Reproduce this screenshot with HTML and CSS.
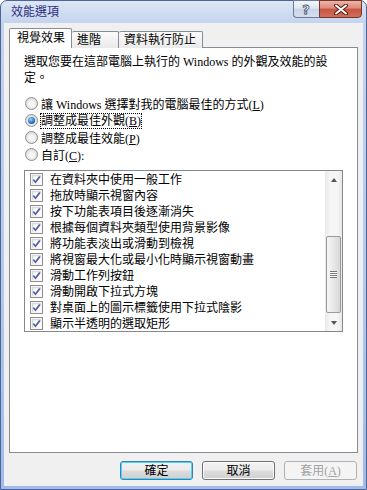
FILE: index.html
```html
<!DOCTYPE html>
<html lang="zh-Hant">
<head>
    <meta charset="utf-8">
    <title>效能選項</title>
    <link rel="stylesheet" href="styles.css">
</head>
<body>
    <div class="window">
        <!-- 標題列 -->
        <div class="titlebar">
            <span class="title">效能選項</span>
            <div class="caption">
                <div class="cap help">?</div>
                <div class="cap close">
                    <svg width="16" height="11" viewBox="0 0 16 11">
                        <path d="M3 1.5 L13 9.5 M13 1.5 L3 9.5" stroke="#5b1d16" stroke-width="4" stroke-linecap="round"/>
                        <path d="M3 1.5 L13 9.5 M13 1.5 L3 9.5" stroke="#fff" stroke-width="2" stroke-linecap="round"/>
                    </svg>
                </div>
            </div>
        </div>
        <div class="client">
            <div class="tabs">
                <div class="tab active">視覺效果</div>
                <div class="tab t2">進階</div>
                <div class="tab t3">資料執行防止</div>
            </div>
            <div class="panel">
                <p class="intro">選取您要在這部電腦上執行的 Windows 的外觀及效能的設定。</p>
                <ul class="radios">
                    <li><span class="radio"></span><span>讓 Windows 選擇對我的電腦最佳的方式(<u>L</u>)</span></li>
                    <li><span class="radio on"></span><span class="focus">調整成最佳外觀(<u>B</u>)</span></li>
                    <li><span class="radio"></span><span>調整成最佳效能(<u>P</u>)</span></li>
                    <li><span class="radio"></span><span>自訂(<u>C</u>):</span></li>
                </ul>
                <div class="listbox">
                    <ul class="items">
                        <li><span class="check"></span>在資料夾中使用一般工作</li>
                        <li><span class="check"></span>拖放時顯示視窗內容</li>
                        <li><span class="check"></span>按下功能表項目後逐漸消失</li>
                        <li><span class="check"></span>根據每個資料夾類型使用背景影像</li>
                        <li><span class="check"></span>將功能表淡出或滑動到檢視</li>
                        <li><span class="check"></span>將視窗最大化或最小化時顯示視窗動畫</li>
                        <li><span class="check"></span>滑動工作列按鈕</li>
                        <li><span class="check"></span>滑動開啟下拉式方塊</li>
                        <li><span class="check"></span>對桌面上的圖示標籤使用下拉式陰影</li>
                        <li><span class="check"></span>顯示半透明的選取矩形</li>
                    </ul>
                    <div class="scrollbar">
                        <div class="arrow up"></div>
                        <div class="track">
                            <div class="thumb"><span class="grip"></span></div>
                        </div>
                        <div class="arrow down"></div>
                    </div>
                </div>
            </div>
            <div class="buttons">
                <button type="button" class="btn default">確定</button>
                <button type="button" class="btn">取消</button>
                <button type="button" class="btn" disabled>套用(<u>A</u>)</button>
            </div>
        </div>
    </div>
</body>
</html>
```

FILE: styles.css
```css
* {
    margin: 0;
    padding: 0;
    box-sizing: border-box;
}
body {
    font-family: "Liberation Serif", "Noto Sans CJK TC", serif;
    font-size: 12px;
    color: #000;
    background: #fff;
}
ul {
    list-style: none;
}
.window {
    width: 367px;
    height: 490px;
    display: flex;
    flex-direction: column;
    border: 1px solid #4c6596;
    border-radius: 7px 7px 0 0;
    background: linear-gradient(#dde6f5, #c4d3ee 22px, #b3c8ec 60%, #9fbbeb);
    padding: 0 3px 3px;
}
.titlebar {
    height: 22px;
    display: flex;
    align-items: flex-start;
}
.title {
    margin: 4px 0 0 7px;
    line-height: 14px;
    color: #2c2f7e;
}
.caption {
    display: flex;
    margin: -1px 1px 0 auto;
}
.cap {
    height: 18px;
    display: flex;
    align-items: center;
    justify-content: center;
}
.help {
    width: 26px;
    border: 1px solid #6b7a98;
    border-right: 0;
    border-radius: 0 0 0 4px;
    background: linear-gradient(#f2f5fa, #dfe6f2 45%, #c9d4e8 50%, #d6deee);
    font-family: "DejaVu Sans", sans-serif;
    font-weight: bold;
    font-size: 13px;
    color: #e8ecf2;
    -webkit-text-stroke: 0.8px #505a70;
    padding-right: 1px;
}
.close {
    width: 43px;
    border: 1px solid #76342b;
    border-radius: 0 0 4px 0;
    background: linear-gradient(#ecb4a8, #db8c7c 45%, #c9533f 50%, #d0705b);
}
.client {
    flex: 1;
    display: flex;
    flex-direction: column;
    background: #f0f0f0;
    padding: 5px 5px 6px;
}
.tabs {
    display: flex;
    align-items: flex-end;
    height: 20px;
    margin-bottom: -1px;
    position: relative;
    z-index: 1;
}
.tab {
    height: 17px;
    line-height: 16px;
    padding-left: 5px;
    border: 1px solid #898c95;
    border-bottom: 0;
    border-left: 0;
    border-radius: 2px 2px 0 0;
    background: linear-gradient(#fcfcfc, #eaeaea);
}
.tab.active {
    width: 63px;
    height: 20px;
    line-height: 19px;
    padding-left: 7px;
    border-left: 1px solid #898c95;
    background: #fff;
}
.t2 {
    width: 47px;
}
.t3 {
    width: 84px;
}
.panel {
    flex: 1;
    background: #fff;
    border: 1px solid #898c95;
    padding: 6px 14px 0;
}
.intro {
    width: 312px;
    line-height: 16px;
    margin-bottom: 9px;
}
.radios li {
    height: 17px;
    display: flex;
    align-items: center;
}
.radio {
    width: 13px;
    height: 13px;
    margin: 0 3px 0 1px;
    border-radius: 50%;
    border: 1px solid #8f8f8f;
    background: radial-gradient(circle at 50% 55%, #f6f6f6 30%, #d9d9d9 75%);
    display: flex;
    align-items: center;
    justify-content: center;
}
.radio.on::after {
    content: "";
    width: 7px;
    height: 7px;
    border-radius: 50%;
    background: radial-gradient(circle at 40% 35%, #9ad8fc, #2a70c4 55%, #173e88);
}
.focus {
    outline: 1px dotted #000;
    outline-offset: 0;
    line-height: 14px;
}
.listbox {
    margin-top: 7px;
    width: 319px;
    height: 162px;
    border: 1px solid #828790;
    display: flex;
}
.items {
    flex: 1;
    padding-left: 5px;
}
.items li {
    height: 16px;
    display: flex;
    align-items: center;
}
.check {
    width: 13px;
    height: 13px;
    margin-right: 7px;
    border: 1px solid #8f8f8f;
    background: #fff url("data:image/svg+xml,%3Csvg xmlns='http://www.w3.org/2000/svg' width='11' height='11'%3E%3Cpath d='M2 5.5 L4.5 8.2 L9 2.2' fill='none' stroke='%234a5f9e' stroke-width='1.8'/%3E%3C/svg%3E") center no-repeat;
    box-shadow: inset 0 0 0 1px #f4f4f4, inset 1px 1px 2px 1px #cfcfcf;
}
.scrollbar {
    width: 17px;
    display: flex;
    flex-direction: column;
    background: linear-gradient(90deg, #e8e8e8, #f6f6f6 30%, #f6f6f6 70%, #e8e8e8);
}
.arrow {
    height: 17px;
    display: flex;
    align-items: center;
    justify-content: center;
}
.arrow::after {
    content: "";
    border-left: 3.5px solid transparent;
    border-right: 3.5px solid transparent;
}
.up::after {
    border-bottom: 4px solid #555;
}
.down::after {
    border-top: 4px solid #555;
}
.track {
    flex: 1;
    padding: 0 1px;
}
.thumb {
    margin-top: 48px;
    height: 77px;
    border: 1px solid #9a9a9a;
    border-radius: 2px;
    background: linear-gradient(90deg, #f6f6f6, #e8e8e8 50%, #d7d7d7);
    display: flex;
    align-items: center;
    justify-content: center;
}
.grip {
    width: 7px;
    height: 7px;
    background: linear-gradient(#777 1px, #fff 1px) 0 0 / 7px 2px;
}
.buttons {
    display: flex;
    justify-content: flex-end;
    gap: 9px;
    margin-top: 8px;
    padding-right: 1px;
}
.btn {
    width: 73px;
    height: 19px;
    font: inherit;
    line-height: 16px;
    color: #000;
    border: 1px solid #707070;
    border-radius: 3px;
    background: linear-gradient(#f2f2f2, #ebebeb 48%, #dddddd 52%, #cfcfcf);
    box-shadow: inset 0 0 0 1px #fbfbfb;
}
.btn.default {
    border-color: #3c7fb1;
    box-shadow: inset 0 0 0 1px #48d7f6;
}
.btn:disabled {
    color: #a3a3a3;
    border-color: #adb2b5;
    background: #f4f4f4;
    box-shadow: none;
}
```
